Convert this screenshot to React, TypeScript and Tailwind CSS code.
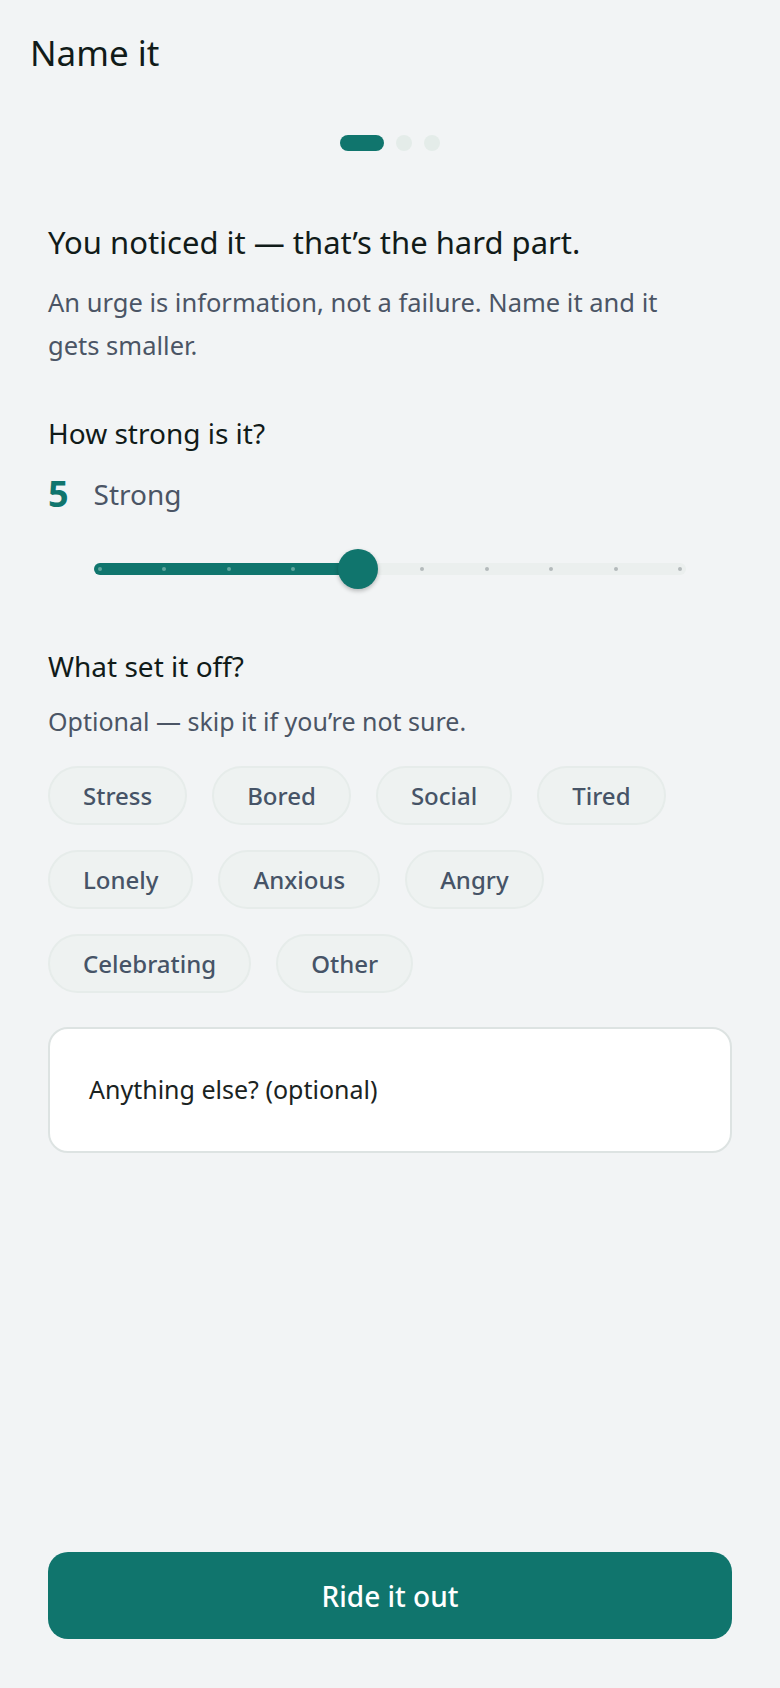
import { useState } from 'react';

const triggers = ['Stress', 'Bored', 'Social', 'Tired', 'Lonely', 'Anxious', 'Angry', 'Celebrating', 'Other'];

const STEPS = 10;
const TRACK_PAD = 6;
const STEP_GAP = 64.44;

function StrengthSlider({ value }: { value: number }) {
  const idx = value - 1;
  const thumbCenter = TRACK_PAD + idx * STEP_GAP;
  return (
    <div className="relative ml-[46px] h-[40px] w-[592px]">
      <div className="absolute inset-x-0 top-[14px] h-[12px] rounded-full bg-[#ebefee]" />
      <div className="absolute left-0 top-[14px] h-[12px] rounded-full bg-[#10756d]" style={{ width: thumbCenter + 6 }} />
      {Array.from({ length: STEPS }).map((_, i) => (
        <span
          key={i}
          className={`absolute top-[18px] h-[4px] w-[4px] rounded-full ${i <= idx ? 'bg-[#5fa59c]' : 'bg-[#b4babb]'}`}
          style={{ left: TRACK_PAD + i * STEP_GAP - 2 }}
        />
      ))}
      <div
        className="absolute top-0 h-[40px] w-[40px] rounded-full bg-[#10756d] shadow-[0_2px_4px_rgba(0,0,0,0.25)]"
        style={{ left: thumbCenter - 20 }}
      />
    </div>
  );
}

export default function App() {
  const [strength] = useState(5);

  return (
    <div className="flex min-h-screen w-full flex-col bg-[#f2f4f5] font-['Noto_Sans',sans-serif]">
      <header className="px-[30px] pt-[29px]">
        <h1 className="text-[35px] leading-[48px] text-[#111b19]">Name it</h1>
      </header>

      <div className="mt-[58px] flex items-center justify-center gap-[12px]">
        <span className="h-[16px] w-[44px] rounded-full bg-[#10756d]" />
        <span className="h-[16px] w-[16px] rounded-full bg-[#e4ece9]" />
        <span className="h-[16px] w-[16px] rounded-full bg-[#e4ece9]" />
      </div>

      <main className="flex flex-1 flex-col px-[48px]">
        <h2 className="mt-[71px] text-[31px] leading-[40px] text-[#111b19]">You noticed it — that’s the hard part.</h2>
        <p className="mt-[19px] max-w-[660px] text-[25.5px] leading-[43px] text-[#4b5565]">
          An urge is information, not a failure. Name it and it gets smaller.
        </p>

        <h3 className="mt-[48px] text-[28px] leading-[36px] text-[#111b19]">How strong is it?</h3>
        <div className="mt-[23px] flex h-[40px] items-center gap-[25px]">
          <span className="text-[36px] font-bold leading-[40px] text-[#10756d]">{strength}</span>
          <span className="text-[28px] leading-[40px] text-[#4b5565]">Strong</span>
        </div>

        <div className="mt-[35px]">
          <StrengthSlider value={strength} />
        </div>

        <h3 className="mt-[59px] text-[28px] leading-[36px] text-[#111b19]">What set it off?</h3>
        <p className="mt-[19px] text-[25px] leading-[36px] text-[#4b5565]">Optional — skip it if you’re not sure.</p>

        <div className="mt-[27px] flex flex-wrap gap-[25px]">
          {triggers.map((t) => (
            <button
              key={t}
              type="button"
              className="flex h-[59px] items-center rounded-full border-2 border-[#e6ecea] bg-[#eef2f1] px-[33px] text-[24px] font-medium text-[#465467]"
            >
              {t}
            </button>
          ))}
        </div>

        <div className="mt-[34px] flex h-[126px] items-center rounded-[20px] border-2 border-[#dde3e2] bg-white pl-[39px]">
          <span className="text-[25px] text-[#1a2322]">Anything else? (optional)</span>
        </div>

        <button
          type="button"
          className="mb-[49px] mt-auto h-[87px] w-full rounded-[20px] bg-[#10756d] text-[28px] font-medium text-white"
        >
          Ride it out
        </button>
      </main>
    </div>
  );
}
